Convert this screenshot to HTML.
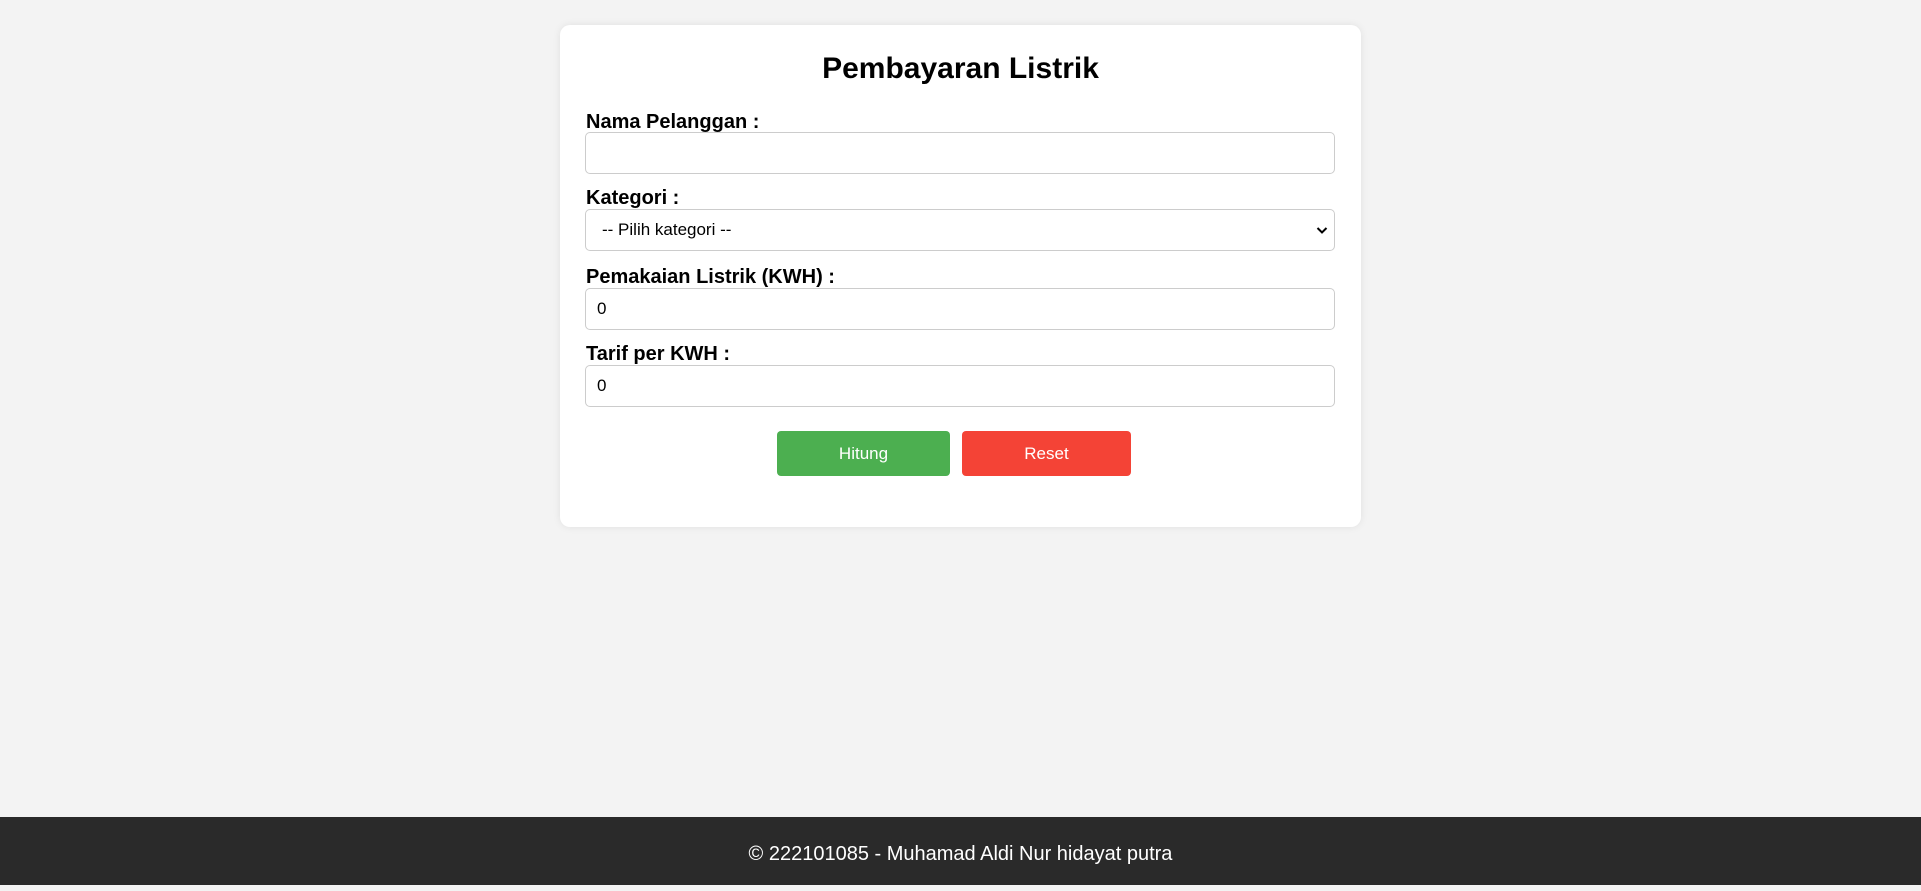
<!DOCTYPE html>
<html><head><meta charset="utf-8"><style>
*{box-sizing:border-box;margin:0;padding:0}
html,body{width:1921px;height:885px;overflow:hidden;background:#f3f3f3;font-family:"Liberation Sans",Arial,sans-serif}
.card{position:absolute;left:560px;top:25px;width:801px;height:502px;background:#fff;border-radius:10px;box-shadow:0 0 8px rgba(0,0,0,0.08)}
h1{position:absolute;left:0;width:801px;top:52px;text-align:center;font-size:30px;font-weight:bold;color:#000;line-height:34px}
.lbl{position:absolute;left:586px;font-size:20px;font-weight:bold;color:#000;line-height:22px}
.in{position:absolute;left:585px;width:750px;height:42px;border:1px solid #ccc;border-radius:5px;background:#fff;font-size:17px;color:#000;padding-left:11px;line-height:40px}
.btn{position:absolute;top:431px;height:45px;border-radius:4px;color:#fff;font-size:17px;text-align:center;line-height:46px}
.foot{position:absolute;left:0;top:817px;width:1921px;height:68px;background:#2a2a2a;color:#fff;text-align:center;font-size:20px;line-height:74px}
</style></head><body>
<div class="card"></div>
<h1 style="position:absolute;left:560px">Pembayaran Listrik</h1>
<div class="lbl" style="top:111px">Nama Pelanggan :</div>
<div class="in" style="top:132px"></div>
<div class="lbl" style="top:187px">Kategori :</div>
<div class="in" style="top:209px;padding-left:16px">-- Pilih kategori --<svg style="position:absolute;right:6px;top:16px" width="12" height="9" viewBox="0 0 12 9"><path d="M1.5 2 L6 6.5 L10.5 2" fill="none" stroke="#000" stroke-width="2"/></svg></div>
<div class="lbl" style="top:266px">Pemakaian Listrik (KWH) :</div>
<div class="in" style="top:288px">0</div>
<div class="lbl" style="top:343px">Tarif per KWH :</div>
<div class="in" style="top:365px">0</div>
<div class="btn" style="left:777px;width:173px;background:#4caf50">Hitung</div>
<div class="btn" style="left:962px;width:169px;background:#f44336">Reset</div>
<div class="foot">© 222101085 - Muhamad Aldi Nur hidayat putra</div>
</body></html>
